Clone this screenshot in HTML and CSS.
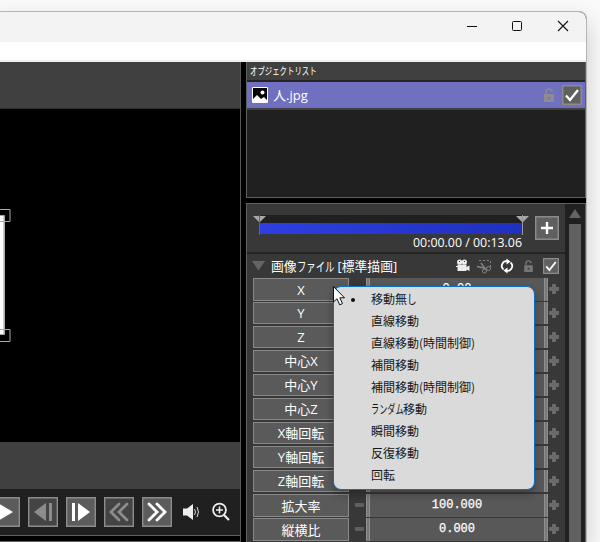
FILE: index.html
```html
<!DOCTYPE html>
<html lang="ja">
<head>
<meta charset="utf-8">
<title>オブジェクトリスト</title>
<link rel="stylesheet" href="styles.css">
</head>
<body>
<svg class="defs" width="0" height="0" aria-hidden="true">
  <symbol id="check" viewBox="0 0 20 20"><rect x=".75" y=".75" width="18.5" height="18.5" fill="#606060" stroke="#8c8c8c" stroke-width="1.5"/><path d="M4 10.500 8 15 16 5" fill="none" stroke="#fff" stroke-width="2.300"/></symbol>
  <symbol id="lock" viewBox="0 0 12 14"><path d="M3 6V4.200C3 2 4 1 6 1s3 1 3 2.700" fill="none" stroke="currentColor" stroke-width="1.600"/><path fill-rule="evenodd" d="M1 6h10v8H1zM5 9v2h2V9z" fill="currentColor"/></symbol>
</svg>
<main class="window">
  <header class="titlebar">
    <svg width="104" height="14" viewBox="0 0 104 14" fill="none" stroke="#111">
      <path d="M0 7.500h10M91 2l10 10M101 2 91 12" stroke-width="1.100"/><rect x="45.500" y="2.500" width="9" height="9" rx="1"/>
    </svg>
  </header>
  <div class="menubar"></div>
  <div class="content">
    <section class="preview">
      <div class="preview-top"></div>
      <div class="stage">
        <svg width="14" height="136" viewBox="0 0 14 136" fill="none">
          <path d="M0 7h4v119H0z" fill="#fff"/>
          <path d="M0 6.500h4.500v119H0" stroke="#a8a8a8"/>
          <path d="M3.500 7v118" stroke="#ccc"/>
          <path d="M0 .5h10v12H0M0 120.500h10v12H0" stroke="#aaa"/>
        </svg>
      </div>
      <div class="preview-bottom"></div>
      <div class="transport">
        <svg width="240" height="46" viewBox="0 0 240 46">
          <g stroke="#8c8c8c" stroke-width="1.400"><path d="M-9.300 8.700h28.600v28.600H-9.300zM66.700 8.700h28.600v28.600H66.700zM142.700 8.700h28.600v28.600h-28.600z" fill="#5c5c5c"/><path d="M28.700 8.700h28.600v28.600H28.700zM104.700 8.700h28.600v28.600h-28.600z" fill="#444"/></g>
          <path d="M-2 14 13 23-2 32zM72 14h3v18h-3zM78 14l12 9-12 9z" fill="#fff"/>
          <path d="M49 14h3v18h-3zM46 14l-12 9 12 9z" fill="#8c8c8c"/>
          <g fill="none" stroke-width="2.800" stroke-linecap="round"><path d="M119 15l-8 8 8 8M127 15l-8 8 8 8" stroke="#8c8c8c"/><path d="M149 15l8 8-8 8M157 15l8 8-8 8" stroke="#fff"/></g>
          <path d="M183 19.500h4l6-4.500v16l-6-4.500h-4z" fill="#eee"/>
          <path d="M194.500 20q2 3 0 6M197 18q3 5 0 10" fill="none" stroke="#ddd"/>
          <g fill="none" stroke="#eee"><circle cx="219.500" cy="21" r="6.400" stroke-width="1.800"/><path d="M224 26l5 5" stroke-width="2.200"/><path d="M216 21h7M219.500 17.500v7" stroke-width="1.600"/></g>
        </svg>
      </div>
      <div class="divider"></div>
    </section>
    <div class="gutter"></div>
    <aside class="side">
      <section class="objects">
        <h2><span>オブジェクトリスト</span></h2>
        <div class="object">
          <svg width="16" height="16" viewBox="0 0 16 16"><path d="M.5.5h15v15H.5z" fill="#050508" stroke="#fff"/><circle cx="10.500" cy="5.500" r="2" fill="#fff"/><path d="M1 12l4-4 4 4 3-2 3 3v2H1z" fill="#fff"/></svg>
          <span class="name">人.jpg</span>
          <svg class="lock" width="12" height="14"><use href="#lock"/></svg>
          <svg width="20" height="20"><use href="#check"/></svg>
        </div>
      </section>
      <div class="gap"></div>
      <section class="props">
        <div class="panel">
          <div class="timeline">
            <div class="track">
              <div class="rail"></div><div class="bar"></div>
              <svg class="markers" width="276" height="20" viewBox="0 0 276 20"><path d="M0 1h13L6.500 7.500zM263 1h13l-6.500 6.500z" fill="#a8a8a8"/><path d="M6.500 0v20" stroke="#a34a4a"/><path d="M269.500 0v20" stroke="#999"/></svg>
              <div class="time"><span>00:00.00 / 00:13.06</span></div>
            </div>
            <svg class="add" width="24" height="24" viewBox="0 0 24 24"><path d="M.7.7h22.600v22.600H.7z" fill="#606060" stroke="#8c8c8c" stroke-width="1.400"/><path d="M12 6v12M6 12h12" stroke="#fff" stroke-width="2.400"/></svg>
          </div>
          <div class="section">
            <svg width="14" height="10" viewBox="0 0 14 10"><path d="M0 0h13L6.500 9.500z" fill="#646464"/></svg>
            <span class="title">画像<i class="k-file">ファイル</i><span class="mode">[標準描画]</span></span>
            <svg class="tools" width="103" height="18" viewBox="0 0 103 18">
              <g fill="#eee"><circle cx="3.600" cy="5" r="2.600"/><circle cx="8.400" cy="5" r="2.600"/><path d="M1.500 7.500h9V14h-9zM10.500 10l3-1.500V14l-3-1.500zM0 9h2v1H0z"/></g>
              <path d="M3 4.500h1M8 4.500h1" stroke="#383838"/>
              <g fill="none" stroke="#858585"><path d="M23 3.500h12M34.500 4v8" stroke-dasharray="2 2"/><path d="M21 9.500l9 2M25 6l5 7" stroke-width="1.400"/><circle cx="32.500" cy="11.500" r="2"/><circle cx="28.500" cy="14" r="2"/></g>
              <g fill="none" stroke="#fff" stroke-width="1.800"><path d="M47.500 12.500a4.700 4.700 0 0 1 4-8.200M54.500 5.500a4.700 4.700 0 0 1-4 8.200"/></g>
              <path d="M50.500 1.500l4 3-4 3zM51.500 10.500l-4 3 4 3z" fill="#fff"/>
              <use href="#lock" x="67" y="3" width="11" height="12" color="#777"/><use href="#check" x="87" y="1" width="16" height="16"/>
            </svg>
          </div>
          <div class="rows">
            <div class="row"><button>X</button><b></b><output>0.00</output><em></em></div>
            <div class="row"><button>Y</button><b></b><output></output><em></em></div>
            <div class="row"><button>Z</button><b></b><output></output><em></em></div>
            <div class="row"><button>中心X</button><b></b><output></output><em></em></div>
            <div class="row"><button>中心Y</button><b></b><output></output><em></em></div>
            <div class="row"><button>中心Z</button><b></b><output></output><em></em></div>
            <div class="row"><button>X軸回転</button><b></b><output></output><em></em></div>
            <div class="row"><button>Y軸回転</button><b></b><output></output><em></em></div>
            <div class="row"><button>Z軸回転</button><b></b><output></output><em></em></div>
            <div class="row"><button>拡大率</button><b></b><output>100.000</output><em></em></div>
            <div class="row"><button>縦横比</button><b></b><output>0.000</output><em></em></div>
          </div>
        </div>
        <div class="scrollbar"><div class="up"></div><div class="thumb"></div></div>
      </section>
    </aside>
  </div>
</main>
<ul class="popup">
  <li class="selected">移動無<i class="k-shi">し</i></li>
  <li>直線移動</li>
  <li>直線移動(時間制御)</li>
  <li>補間移動</li>
  <li>補間移動(時間制御)</li>
  <li><i class="k-random">ランダム</i>移動</li>
  <li>瞬間移動</li>
  <li>反復移動</li>
  <li>回転</li>
</ul>
<svg class="cursor" width="14" height="21" viewBox="0 0 14 21"><path d="M.5.5v15.500l3.500-3.200 2.700 6 2.800-1.200-2.700-5.800H11.500z" fill="#fff" stroke="#111"/></svg>
</body>
</html>
```
FILE: styles.css
```css
* { box-sizing: border-box; }
body {
  margin: 0;
  width: 600px;
  height: 542px;
  overflow: hidden;
  display: flex;
  align-items: flex-end;
  background: #fafafa;
  font-family: "Open Sans", "Noto Sans CJK JP", sans-serif;
  color: #fff;
}
svg { display: block; flex: none; }
.defs { position: absolute; }
i { font-style: normal; display: inline-block; transform-origin: 0 50%; white-space: nowrap; }

.window {
  width: 587px;
  height: 531px;
  border: solid #b4b4b4;
  border-width: 1px 1px 0 0;
  border-radius: 0 8px 0 0;
  box-shadow: 0 10px 24px rgba(0, 0, 0, .2);
  overflow: hidden;
  display: flex;
  flex-direction: column;
  background: #000;
}
.titlebar { height: 30px; flex: none; background: #f3f3f3; padding: 7px 0 0 467px; }
.menubar { height: 20px; flex: none; background: #fff; border-bottom: 2px solid #eef0f0; }
.content { display: flex; flex: 1; min-height: 0; }

.preview { width: 241px; border-right: 1px solid #585858; }
.preview-top { height: 47px; background: #404040; border-bottom: 1px solid #303030; }
.stage { height: 333px; padding-top: 100px; background: #000; }
.preview-bottom { height: 47px; background: #404040; }
.transport { height: 47px; background: #202020; border-bottom: 1px solid #606060; }
.divider { height: 6px; background: #000; border-bottom: 1px solid #606060; }
.gutter { width: 5px; background: #000; }

.side { width: 340px; display: flex; flex-direction: column; }
.objects { height: 136px; flex: none; border: solid #606060; border-width: 0 1px 1px; background: #202020; }
.objects h2 { margin: 0; height: 20px; padding-left: 3px; background: #404040; border-bottom: 2px solid #242424; font-size: 10px; font-weight: 400; line-height: 19px; }
.objects h2 span { display: inline-block; transform: scaleX(.74); transform-origin: 0 50%; white-space: nowrap; }
.object { height: 28px; border-bottom: 2px solid #404040; background: #7070c0; display: flex; align-items: center; padding: 0 3px 0 5px; }
.name { flex: 1; margin-left: 5px; font-size: 13px; line-height: 20px; }
.lock { color: #8c8c8c; margin-right: 7px; }
.gap { height: 5px; flex: none; }
.props { flex: 1; display: flex; min-height: 0; border: solid #606060; border-width: 1px 1px 0; background: #383838; }
.panel { width: 318px; overflow: hidden; }
.timeline { display: flex; height: 50px; padding: 11px 6px 0; border-bottom: 2px solid #242424; }
.track { width: 276px; position: relative; }
.rail { height: 8px; margin: 0 6px; background: #202020; }
.bar { height: 11px; margin: 0 6px 0 7px; background: linear-gradient(90deg, #2e3fe0, #2030be); }
.markers { position: absolute; left: 0; top: 0; }
.time { height: 16px; margin-right: 7px; font-size: 12.4px; line-height: 17px; text-align: right; }
.time span { white-space: nowrap; }
.add { margin: 1px 0 0 6px; }
.section { height: 24px; display: flex; align-items: center; padding: 0 6px 0 5px; }
.title { flex: 1; margin: -1px 0 0 5px; font-size: 12.8px; line-height: 20px; white-space: nowrap; }
.mode { margin-left: 4px; }
.k-file { width: 37px; transform: scaleX(.73); }
.row { height: 22px; margin-bottom: 2px; display: grid; grid-template-columns: 96px 17px 182px 12px; padding-left: 6px; }
.row button { margin: 0; padding: 0; border: 1px solid #8a8a8a; outline: 0; background: #5a5a5a; color: #fff; font: 13px/18px "Open Sans", "Noto Sans CJK JP", sans-serif; }
.row b { width: 9px; height: 4px; margin: 9px 0 0 6px; border-radius: 1px; background: #606060; }
.row output {
  background: linear-gradient(90deg, #909090 1px, #606060 2px, #909090 3px, #909090 4px, transparent 4px, transparent 178px, #909090 178px, #909090 179px, #606060 180px, #909090 181px), #585858;
  font: 12px/23px "Liberation Mono", monospace;
  -webkit-text-stroke: .25px #fff;
  text-align: center;
}
.row em { height: 10px; width: 10px; margin: 6px 0 0 1px; background: linear-gradient(#6a6a6a, #6a6a6a) 50% 50% / 10px 4px no-repeat, linear-gradient(#6a6a6a, #6a6a6a) 50% 50% / 4px 10px no-repeat; }

.scrollbar { width: 20px; background: #202020; padding: 5px 4px 0; }
.up { height: 9px; background: #646464; clip-path: polygon(50% 0, 100% 100%, 0 100%); }
.thumb { height: 330px; margin-top: 6px; background: #606060; }

.popup {
  position: absolute;
  left: 333px;
  top: 286px;
  width: 202px;
  height: 204px;
  margin: 0;
  padding: 1px 0 0 37px;
  list-style: none;
  background: #dadada;
  border: 1px solid #0a6fc0;
  border-radius: 8px;
  box-shadow: 0 4px 9px rgba(0, 0, 0, .28);
  color: #161616;
  font: 12px/22px "Noto Sans CJK JP", sans-serif;
}
.popup li { height: 22px; white-space: nowrap; }
.selected::before { content: ""; float: left; width: 4px; height: 4px; border-radius: 50%; background: #111; margin: 10px 0 0 -20px; }
.selected::before { margin-right: 16px; }
.k-random { width: 32px; transform: scaleX(.68); }
.k-shi { width: 9px; transform: scaleX(.8); }
.cursor { position: absolute; left: 333px; top: 286px; }
```
